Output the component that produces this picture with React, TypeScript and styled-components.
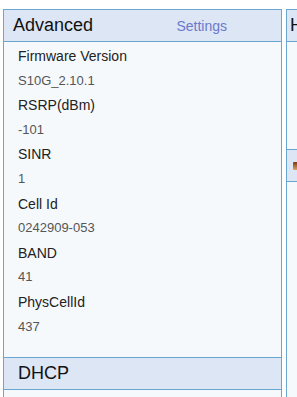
import React from "react";
import styled, { createGlobalStyle } from "styled-components";

const Global = createGlobalStyle`
  html, body { margin: 0; padding: 0; background: #ffffff; overflow: hidden; }
  body { font-family: "Liberation Sans", Arial, sans-serif; }
`;

const Page = styled.div`
  display: flex;
  gap: 4px;
  padding: 9px 0 0 3px;
  width: 700px;
  align-items: flex-start;
`;

const Column = styled.div<{ $w: number }>`
  width: ${(p) => p.$w}px;
  flex: none;
  display: flex;
  flex-direction: column;
  border: 1px solid #6aa6d0;
  border-bottom: none;
  background: #f5f9fc;
`;

const Header = styled.div<{ $pad?: number }>`
  height: 31px;
  display: flex;
  align-items: center;
  justify-content: space-between;
  padding: 0 0 0 ${(p) => p.$pad ?? 9}px;
  background: #dce6f4;
  border-bottom: 1px solid #6aa6d0;
`;

const Title = styled.span`
  font-size: 18px;
  color: #111;
`;

const Link = styled.a`
  font-size: 14px;
  color: #6b79cc;
  text-decoration: none;
  margin-right: 54px;
`;

const Body = styled.div<{ $h?: number }>`
  padding: 2px 14px 18px;
  border-bottom: 1px solid #6aa6d0;
  ${(p) => (p.$h ? `height: ${p.$h}px; padding: 0; box-sizing: border-box;` : "")}
`;

const Label = styled.div`
  font-size: 14px;
  line-height: 24.6px;
  color: #222;
`;

const Value = styled.div`
  font-size: 13px;
  line-height: 24.6px;
  color: #555;
`;

const Icon = styled.span`
  display: inline-block;
  width: 6px;
  height: 8px;
  margin-left: -1px;
  background: linear-gradient(#7a3a10, #e0a060);
  border-radius: 1px;
`;

const rows: [string, string][] = [
  ["Firmware Version", "S10G_2.10.1"],
  ["RSRP(dBm)", "-101"],
  ["SINR", "1"],
  ["Cell Id", "0242909-053"],
  ["BAND", "41"],
  ["PhysCellId", "437"],
];

export default function App() {
  return (
    <>
      <Global />
      <Page>
        <Column $w={277}>
          <Header>
            <Title>Advanced</Title>
            <Link>Settings</Link>
          </Header>
          <Body>
            {rows.map(([l, v]) => (
              <React.Fragment key={l}>
                <Label>{l}</Label>
                <Value>{v}</Value>
              </React.Fragment>
            ))}
          </Body>
          <Header $pad={14}>
            <Title>DHCP</Title>
          </Header>
          <Body $h={40} />
        </Column>
        <Column $w={277}>
          <Header $pad={3}>
            <Title>Home</Title>
          </Header>
          <Body $h={108} />
          <Header $pad={7}>
            <Icon />
          </Header>
          <Body $h={250} />
        </Column>
      </Page>
    </>
  );
}
